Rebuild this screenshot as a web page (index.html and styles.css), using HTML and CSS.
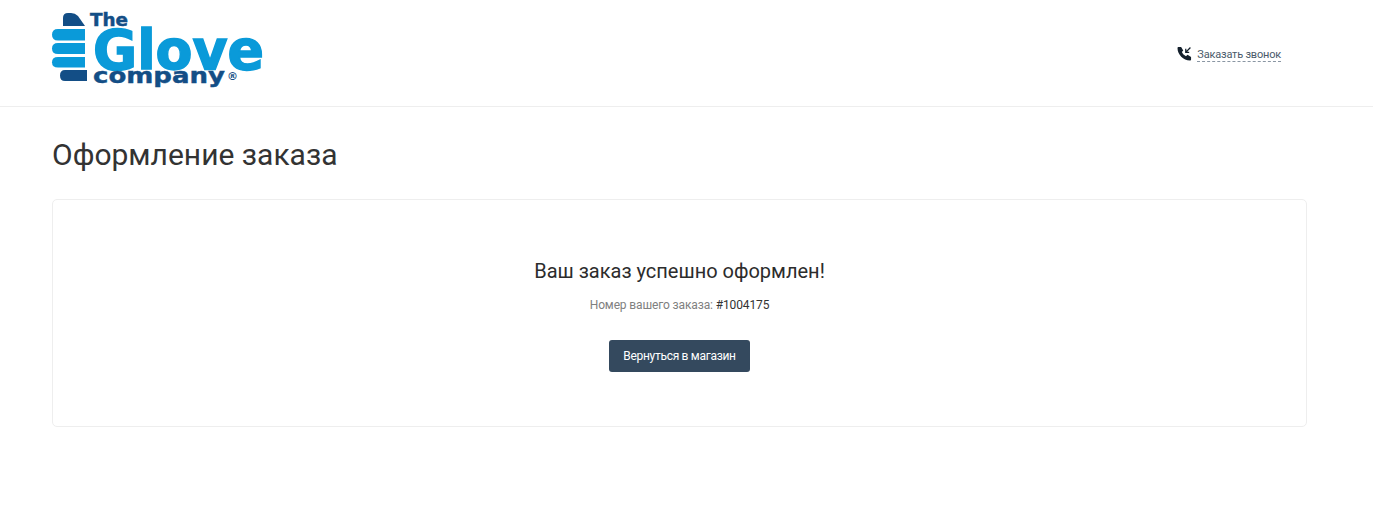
FILE: index.html
```html
<!DOCTYPE html>
<html lang="ru">
<head>
<meta charset="utf-8">
<title>Оформление заказа</title>
<link rel="stylesheet" href="styles.css">
</head>
<body>
<header class="header">
  <a class="logo" href="#" aria-label="The Glove Company">
    <svg width="214" height="80" viewBox="52 11 214 80">
      <path fill="#134e86" d="M63 25v-8q0-5 5-5h3q4 0 7 3l7 10z"/>
      <path fill="#0a9ad9" d="M58 28h27v11.500H58q-6 0-6-5.750T58 28z"/>
      <path fill="#0a9ad9" d="M58 42h27v11H58q-6 0-6-5.500T58 42z"/>
      <path fill="#0a9ad9" d="M58 56h27v10.500H58q-6 0-6-5.250T58 56z"/>
      <path fill="#134e86" d="M65 69h22v11H65q-5 0-5-5.500T65 69z"/>
      <text class="logo-the" x="90" y="25" textLength="38" lengthAdjust="spacingAndGlyphs">The</text>
      <text class="logo-glove" x="93" y="68" textLength="171" lengthAdjust="spacingAndGlyphs">Glove</text>
      <text class="logo-company" x="93" y="82" textLength="132" lengthAdjust="spacingAndGlyphs">company</text>
      <text class="logo-reg" x="227" y="79">®</text>
    </svg>
  </a>
  <div class="callback">
    <svg class="callback-icon" width="15" height="15" viewBox="0 0 24 24"><path fill="#14202c" d="M6.600 1.500l3.400 5.600-2.200 2.600c1.200 2.900 3.600 5.300 6.500 6.500l2.600-2.200 5.600 3.400v4.100c0 1-.8 1.700-1.800 1.700C10.200 23.200 .8 13.800 .8 3.300c0-1 .7-1.800 1.700-1.800z"/><path fill="none" stroke="#14202c" stroke-width="2" d="M21.500 2.500L14.500 9.500M14 4.500V10h5.500"/></svg>
    <a class="callback-link" href="#">Заказать звонок</a>
  </div>
</header>
<main class="page">
  <h1 class="title">Оформление заказа</h1>
  <section class="card">
    <h2 class="card-title">Ваш заказ успешно оформлен!</h2>
    <p class="order">Номер вашего заказа: <span class="order-num">#1004175</span></p>
    <a class="btn" href="#">Вернуться в магазин</a>
  </section>
</main>
</body>
</html>
```
FILE: styles.css
```css
* { box-sizing: border-box; }
html, body { margin: 0; padding: 0; background: #fff; }
body { font-family: Roboto, "Noto Sans", sans-serif; color: #333; height: 532px; overflow: hidden; }
.header {
  height: 107px;
  border-bottom: 1px solid #eeeeee;
  padding: 0 92px 0 52px;
  display: flex;
  align-items: center;
  justify-content: space-between;
}
.logo { display: block; height: 80px; margin-top: -3px; }
.logo svg { display: block; overflow: visible; }
.logo text { font-family: "DejaVu Sans", sans-serif; font-weight: 700; }
.logo-the { font-size: 18px; fill: #134e86; stroke: #134e86; stroke-width: .5px; }
.logo-glove { font-size: 55px; fill: #0a9ad9; stroke: #0a9ad9; stroke-width: 1.500px; stroke-linejoin: miter; }
.logo-company { font-size: 21px; fill: #134e86; stroke: #134e86; stroke-width: .4px; }
.logo-reg { font-size: 11px; fill: #134e86; }
.callback { display: flex; align-items: center; gap: 5px; margin-top: 2px; }
.callback-icon { display: block; margin-bottom: 2px; }
.callback-link {
  font-size: 11px;
  letter-spacing: -.2px;
  line-height: 13px;
  padding-top: 2px;
  color: #4a5a6a;
  text-decoration: none;
  border-bottom: 1px dashed #8a96a3;
}
.page { padding: 0 66px 0 52px; }
.title {
  margin: 28px 0 0;
  font-size: 30px;
  line-height: 40px;
  font-weight: 400;
  color: #333;
}
.card {
  margin-top: 24px;
  height: 228px;
  border: 1px solid #eeeeee;
  border-radius: 5px;
  display: flex;
  flex-direction: column;
  align-items: center;
  padding-top: 57px;
}
.card-title {
  margin: 0;
  font-size: 20px;
  line-height: 28px;
  font-weight: 400;
  color: #2c2c2c;
}
.order {
  margin: 12px 0 0;
  font-size: 12px;
  letter-spacing: -.13px;
  line-height: 16px;
  color: #808080;
}
.order-num { color: #333; }
.btn {
  margin-top: 27px;
  width: 141px;
  height: 32px;
  background: #34495e;
  border-radius: 3px;
  color: #fff;
  font-size: 12px;
  letter-spacing: -.3px;
  line-height: 32px;
  text-align: center;
  text-decoration: none;
}
```
